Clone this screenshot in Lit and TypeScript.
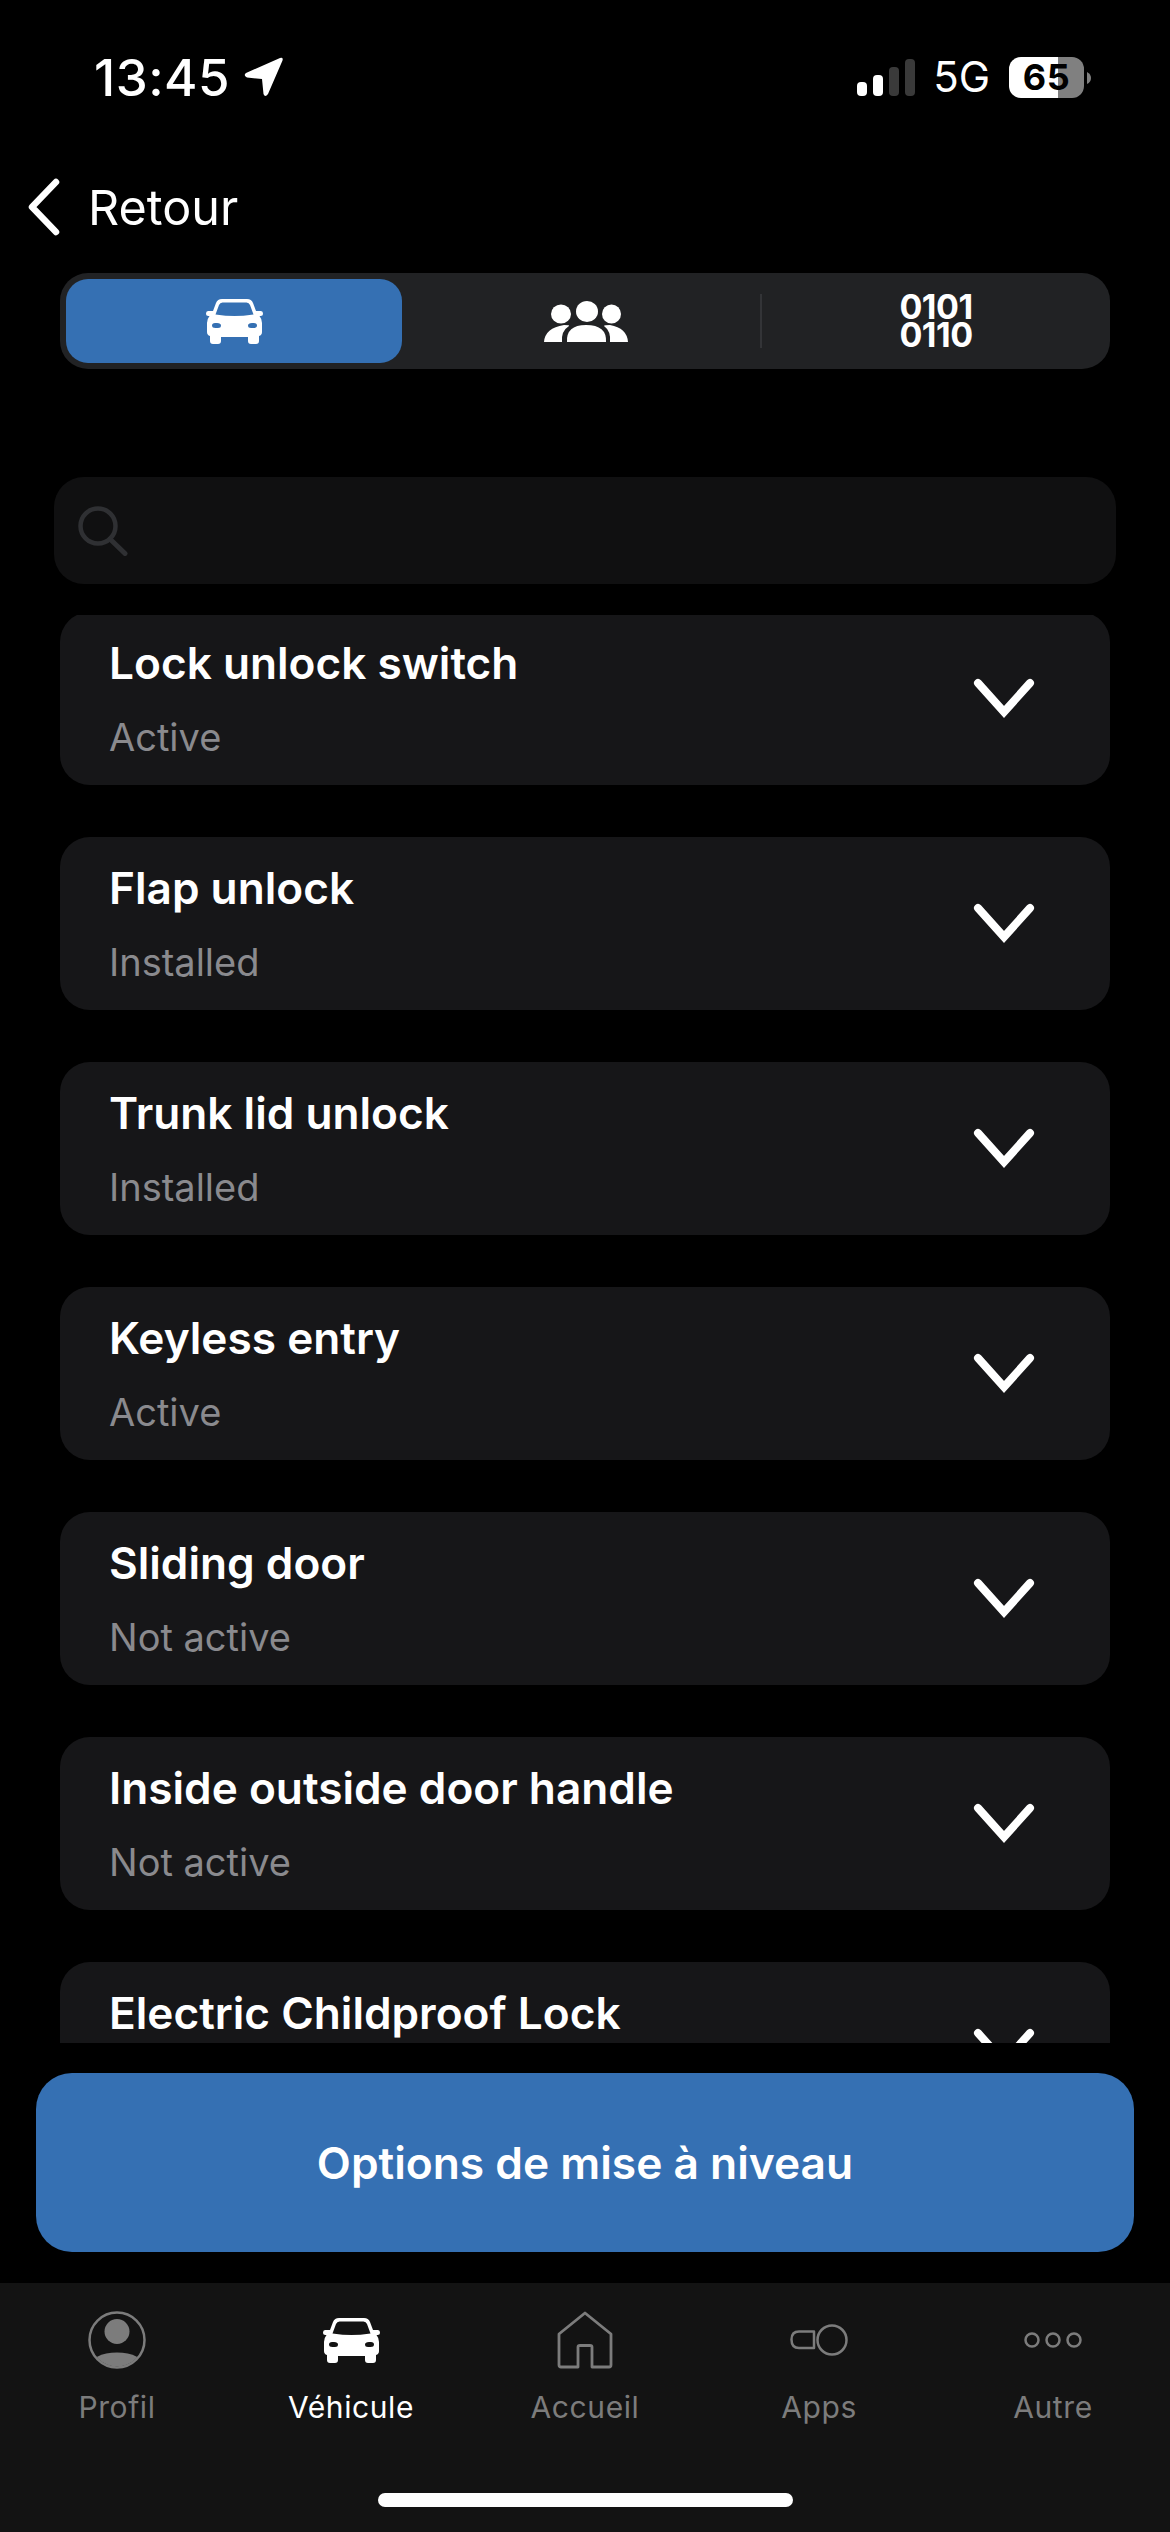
import { LitElement, html, css } from "lit";
import { customElement } from "lit/decorators.js";

const carIcon = (w: number, h: number, cls = "") => html`<svg class=${cls} width=${w} height=${h} viewBox="0 0 57 45">
  <path fill="currentColor" fill-rule="evenodd" d="M16 0H41Q45.5 0 47 4L50 12H55Q57 12 57 14.5Q57 17 54.5 17H53.5Q56 20 56 24V33Q56 36 53 37V42Q53 45 50 45H45Q42 45 42 42V38H15V42Q15 45 12 45H7Q4 45 4 42V37Q1 36 1 33V24Q1 20 3.500 17H2.500Q0 17 0 14.500Q0 12 2 12H7L10 4Q11.500 0 16 0ZM16.500 3.500Q14 3.500 13 6L9.500 15.500Q20 17 28.500 17Q37 17 47.500 15.500L44 6Q43 3.500 40.500 3.500ZM6 26.500Q6 29 9.500 29H12Q15 29 15 26.500Q15 24 11 24H9Q6 24 6 26.500ZM51 26.500Q51 24 48 24H46Q42 24 42 26.500Q42 29 45 29H47.500Q51 29 51 26.500Z"/>
</svg>`;

const chevron = html`<svg class="chev" width="64" height="44" viewBox="0 0 64 44">
  <path d="M6 6L32 35L58 6" fill="none" stroke="#fff" stroke-width="8" stroke-linecap="round" stroke-linejoin="miter"/>
</svg>`;

const rows = [
  ["Lock unlock switch", "Active"],
  ["Flap unlock", "Installed"],
  ["Trunk lid unlock", "Installed"],
  ["Keyless entry", "Active"],
  ["Sliding door", "Not active"],
  ["Inside outside door handle", "Not active"],
  ["Electric Childproof Lock", "Not active"],
];

const navIcons = {
  profil: html`<svg width="58" height="58" viewBox="0 0 58 58">
    <defs><clipPath id="pc"><circle cx="29" cy="29" r="26.500"/></clipPath></defs>
    <circle cx="29" cy="29" r="27.500" fill="none" stroke="currentColor" stroke-width="2.500"/>
    <circle cx="29" cy="20.500" r="12.500" fill="currentColor"/>
    <ellipse cx="29" cy="56" rx="28" ry="14.500" fill="currentColor" clip-path="url(#pc)"/>
  </svg>`,
  home: html`<svg width="56" height="58" viewBox="0 0 56 58">
    <path d="M28 2L54 23V54Q54 56 52 56H35V36Q35 34.500 33 34.500H23Q21 34.500 21 36V56H4Q2 56 2 54V23Z" fill="none" stroke="currentColor" stroke-width="2.800" stroke-linejoin="round"/>
  </svg>`,
  apps: html`<svg width="58" height="32" viewBox="0 0 58 32">
    <path d="M24 7.500H9Q1.500 7.500 1.500 15.500Q1.500 24 9 24H24Z" fill="none" stroke="currentColor" stroke-width="2.500" stroke-linejoin="round"/>
    <ellipse cx="42" cy="16" rx="14.500" ry="14.500" fill="none" stroke="currentColor" stroke-width="2.500"/>
  </svg>`,
  more: html`<svg width="58" height="18" viewBox="0 0 58 18">
    <g fill="none" stroke="currentColor" stroke-width="2.500">
      <circle cx="8" cy="9" r="6.500"/><circle cx="29" cy="9" r="6.500"/><circle cx="50" cy="9" r="6.500"/>
    </g>
  </svg>`,
};

@customElement("app-root")
export class AppRoot extends LitElement {
  static styles = css`
    :host {
      display: block;
      width: 1170px;
      height: 2532px;
      background: #000;
      overflow: hidden;
      color: #fff;
      font-family: Inter, "Noto Sans", "Liberation Sans", sans-serif;
    }
    .screen { display: flex; flex-direction: column; height: 2532px; }
    .status {
      height: 150px; flex: none; box-sizing: border-box;
      display: flex; align-items: flex-start; justify-content: space-between;
      padding: 57px 79px 0 94px;
    }
    .status-left { display: flex; align-items: flex-start; gap: 14px; }
    .time { font-size: 51px; line-height: 42px; font-weight: 500; letter-spacing: 0.5px; }
    .status-right { display: flex; align-items: flex-start; }
    .signal { display: flex; align-items: flex-end; gap: 6px; height: 37px; margin-top: 2px; }
    .signal i { display: block; width: 10px; border-radius: 4px; background: #3a3a3a; }
    .signal i.on { background: #fff; }
    .net { font-size: 42px; line-height: 40px; font-weight: 400; margin: 0 19px 0 18px; }
    .battery {
      width: 75px; height: 41px; border-radius: 12px;
      background: linear-gradient(90deg, #fff 0 65%, #808080 65% 100%);
      color: #000; font-size: 36px; font-weight: 700; line-height: 41px; text-align: center;
      letter-spacing: 0.5px;
    }
    .nub { margin: 15px 0 0 3px; }
    .header { height: 123px; flex: none; display: flex; align-items: flex-start; padding: 28px 0 0 28px; box-sizing: border-box; gap: 28px; }
    .retour { font-size: 48.5px; line-height: 58px; font-weight: 400; margin-top: 1px; }
    .seg {
      flex: none; margin: 0 60px; height: 96px; box-sizing: border-box; padding: 6px;
      background: #212224; border-radius: 28px;
      display: grid; grid-template-columns: 336px 358px 1fr; align-items: center;
    }
    .seg-cell { display: flex; align-items: center; justify-content: center; height: 84px; }
    .seg-cell.active { background: #3570b3; border-radius: 22px; }
    .seg-cell.people { padding-left: 10px; }
    .seg-cell.bin { border-left: 2px solid #333437; height: 54px; padding-left: 6px; }
    .bits { font-size: 34px; line-height: 28px; font-weight: 700; text-align: center; letter-spacing: -0.5px; }
    .search {
      flex: none; margin: 108px 54px 0; height: 107px; border-radius: 30px;
      background: #101011; display: flex; align-items: center; padding-left: 24px; box-sizing: border-box;
    }
    .list {
      flex: none; margin-top: 31px; height: 1428px; overflow: hidden;
      padding: 0 60px; box-sizing: border-box;
    }
    .list-inner { display: flex; flex-direction: column; gap: 52px; margin-top: -3px; }
    .card {
      flex: none; height: 173px; box-sizing: border-box; border-radius: 30px; background: #161618;
      display: flex; align-items: center; justify-content: space-between;
      padding: 0 74px 0 49px;
    }
    .title { font-size: 44.2px; line-height: 52px; font-weight: 600; margin-bottom: 25px; }
    .sub { font-size: 38px; line-height: 46px; font-weight: 400; color: #8a8a8e; }
    .chev { display: block; }
    .cta {
      flex: none; margin: 30px 36px 0; height: 179px; border-radius: 36px; background: #3570b3;
      display: flex; align-items: center; justify-content: center;
      font-size: 44.3px; font-weight: 600;
    }
    .tabbar {
      flex: 1; margin-top: 31px; background: #131313; display: flex; flex-direction: column;
    }
    .tabs { display: grid; grid-template-columns: repeat(5, 234px); height: 210px; flex: none; }
    .tab { display: flex; flex-direction: column; align-items: center; color: #7c7c7c; padding-top: 28px; }
    .tab.active { color: #fff; }
    .ico { height: 58px; display: flex; align-items: center; justify-content: center; }
    .lab { font-size: 30px; line-height: 36px; font-weight: 400; margin-top: 20px; letter-spacing: 0.6px; }
    .home-ind { width: 415px; height: 14px; border-radius: 7px; background: #fff; align-self: center; }
  `;

  render() {
    return html`<div class="screen">
      <div class="status">
        <div class="status-left">
          <span class="time">13:45</span>
          <svg width="40" height="40" viewBox="0 0 40 40"><path fill="#fff" d="M2 16L36 1Q39.500 0 38.500 3.500L24 37Q21 41 19.500 37L18 22L3 20.500Q-1 18.500 2 16Z"/></svg>
        </div>
        <div class="status-right">
          <div class="signal">
            <i class="on" style="height:14px"></i><i class="on" style="height:21px"></i><i style="height:29px"></i><i style="height:37px"></i>
          </div>
          <span class="net">5G</span>
          <div class="battery">65</div>
          <svg class="nub" width="4" height="12" viewBox="0 0 4 12"><path fill="#808080" d="M0 0Q4 2 4 6Q4 10 0 12Z"/></svg>
        </div>
      </div>
      <div class="header">
        <svg width="32" height="58" viewBox="0 0 32 58"><path d="M28 4L4 29L28 54" fill="none" stroke="#fff" stroke-width="6.500" stroke-linecap="round" stroke-linejoin="round"/></svg>
        <span class="retour">Retour</span>
      </div>
      <div class="seg">
        <div class="seg-cell active">${carIcon(57, 45)}</div>
        <div class="seg-cell people">
          <svg width="84" height="41" viewBox="0 0 84 41" fill="#fff">
            <ellipse cx="17" cy="13" rx="10" ry="9.500"/><ellipse cx="43" cy="10.500" rx="11" ry="10.500"/><ellipse cx="67.500" cy="13" rx="9.500" ry="9.500"/>
            <path d="M23 41Q22 24 42 24Q63 24 62 41Z"/>
            <path d="M0 41Q1 27 20 24Q26 24 25 25Q17 30 18 41Z"/>
            <path d="M84 41Q83 27 66 24Q60 24 60 25Q67 30 66 41Z"/>
          </svg>
        </div>
        <div class="seg-cell bin"><div class="bits">0101<br />0110</div></div>
      </div>
      <div class="search">
        <svg width="50" height="50" viewBox="0 0 50 50"><circle cx="20" cy="20" r="17.500" fill="none" stroke="#2f3033" stroke-width="4.500"/><path d="M32 33L47 47.500" stroke="#2f3033" stroke-width="5" stroke-linecap="round"/></svg>
      </div>
      <div class="list"><div class="list-inner">
        ${rows.map(([t, s]) => html`<div class="card">
          <div><div class="title">${t}</div><div class="sub">${s}</div></div>
          ${chevron}
        </div>`)}
      </div></div>
      <div class="cta">Options de mise à niveau</div>
      <div class="tabbar">
        <div class="tabs">
          <div class="tab"><div class="ico">${navIcons.profil}</div><div class="lab">Profil</div></div>
          <div class="tab active"><div class="ico">${carIcon(57, 45)}</div><div class="lab">Véhicule</div></div>
          <div class="tab"><div class="ico">${navIcons.home}</div><div class="lab">Accueil</div></div>
          <div class="tab"><div class="ico">${navIcons.apps}</div><div class="lab">Apps</div></div>
          <div class="tab"><div class="ico">${navIcons.more}</div><div class="lab">Autre</div></div>
        </div>
        <div class="home-ind"></div>
      </div>
    </div>`;
  }
}
